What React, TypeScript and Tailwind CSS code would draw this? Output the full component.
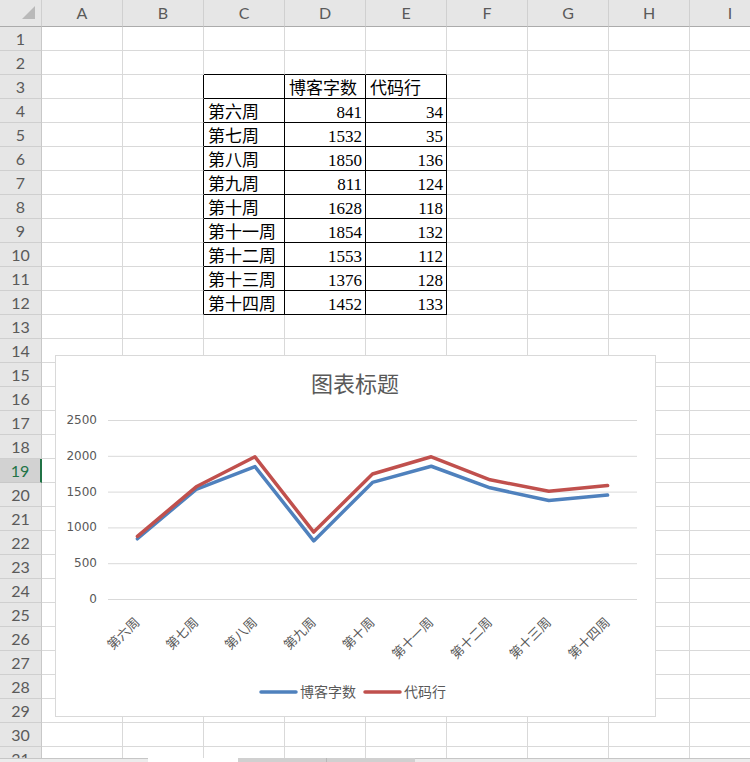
import React from 'react';

const COLS = ['A', 'B', 'C', 'D', 'E', 'F', 'G', 'H', 'I'];
const ROW_COUNT = 31;

const weeks = ['第六周', '第七周', '第八周', '第九周', '第十周', '第十一周', '第十二周', '第十三周', '第十四周'];
const blog = [841, 1532, 1850, 811, 1628, 1854, 1553, 1376, 1452];
const code = [34, 35, 136, 124, 118, 132, 112, 128, 133];

const inTable = (r: number, c: number) => r >= 3 && r <= 12 && c >= 3 && c <= 5;

function cellText(r: number, c: number): { text: string; right?: boolean } | null {
  if (!inTable(r, c)) return null;
  if (r === 3) {
    if (c === 4) return { text: '博客字数' };
    if (c === 5) return { text: '代码行' };
    return null;
  }
  const i = r - 4;
  if (c === 3) return { text: weeks[i] };
  if (c === 4) return { text: String(blog[i]), right: true };
  return { text: String(code[i]), right: true };
}

function Chart() {
  const x0 = 52;
  const x1 = 581;
  const y0 = 243;
  const k = (243 - 64) / 2500;
  const step = (x1 - x0) / 9;
  const cx = (i: number) => x0 + (i + 0.5) * step;
  const y = (v: number) => y0 - v * k;
  const blue = blog.map((v, i) => `${cx(i)},${y(v)}`).join(' ');
  const red = blog.map((v, i) => `${cx(i)},${y(v + code[i])}`).join(' ');
  const ticks = [0, 500, 1000, 1500, 2000, 2500];

  return (
    <div className="absolute left-[55px] top-[355px] w-[601px] h-[362px] border border-[#d9d9d9] bg-white">
      <svg width="599" height="360" className="block">
        <text x="299" y="36" textAnchor="middle" fontSize="22" fill="#595959" fontFamily="'Noto Sans CJK SC', sans-serif">
          图表标题
        </text>
        {ticks.map(t => (
          <g key={t}>
            <line x1={x0} x2={x1} y1={y(t) + 0.5} y2={y(t) + 0.5} stroke="#d9d9d9" strokeWidth="1" />
            <text x="41" y={y(t) + 4} textAnchor="end" fontSize="12" fill="#595959" fontFamily="'DejaVu Sans', sans-serif">
              {t}
            </text>
          </g>
        ))}
        <polyline points={blue} fill="none" stroke="#4f81bd" strokeWidth="3.5" strokeLinejoin="round" strokeLinecap="round" />
        <polyline points={red} fill="none" stroke="#c0504d" strokeWidth="3.5" strokeLinejoin="round" strokeLinecap="round" />
        {weeks.map((w, i) => (
          <text
            key={w}
            x={cx(i) + 3}
            y="267"
            textAnchor="end"
            fontSize="13"
            fill="#595959"
            fontFamily="'Noto Sans CJK SC', sans-serif"
            transform={`rotate(-45 ${cx(i) + 3} 267)`}
          >
            {w}
          </text>
        ))}
        <line x1="205" x2="240" y1="336" y2="336" stroke="#4f81bd" strokeWidth="3.5" strokeLinecap="round" />
        <text x="244" y="341" fontSize="14" fill="#595959" fontFamily="'Noto Sans CJK SC', sans-serif">
          博客字数
        </text>
        <line x1="309" x2="344" y1="336" y2="336" stroke="#c0504d" strokeWidth="3.5" strokeLinecap="round" />
        <text x="348" y="341" fontSize="14" fill="#595959" fontFamily="'Noto Sans CJK SC', sans-serif">
          代码行
        </text>
      </svg>
    </div>
  );
}

export default function App() {
  const rows = Array.from({ length: ROW_COUNT }, (_, i) => i + 1);

  return (
    <div className="relative w-[750px] h-[762px] overflow-hidden bg-white flex flex-col">
      <div className="h-[758px] overflow-hidden">
        <div className="grid grid-cols-[42px_repeat(9,81px)] grid-rows-[27px_repeat(31,24px)] w-[771px]">
          {/* corner */}
          <div className="bg-[#e6e6e6] border-r border-b border-r-[#cfcfcf] border-b-[#ababab] flex items-end justify-end pr-[6px] pb-[7px]">
            <svg width="13" height="13">
              <polygon points="13,0 13,13 0,13" fill="#b9b9b9" />
            </svg>
          </div>
          {COLS.map(c => (
            <div
              key={c}
              className="bg-[#e6e6e6] border-r border-b border-r-[#d0d0d0] border-b-[#ababab] flex items-center justify-center text-[16px] text-[#5a5a5a] font-['Lato',sans-serif]"
            >
              {c}
            </div>
          ))}
          {rows.map(r => (
            <React.Fragment key={r}>
              <div
                className={
                  r === 19
                    ? "bg-[#d2d2d2] border-b border-b-[#c8c8c8] border-r-2 border-r-[#217346] flex items-center justify-center text-[16px] text-[#217346] font-['Lato',sans-serif]"
                    : "bg-[#e6e6e6] border-b border-r border-b-[#cfcfcf] border-r-[#c8c8c8] flex items-center justify-center text-[16px] text-[#5a5a5a] font-['Lato',sans-serif]"
                }
              >
                {r}
              </div>
              {COLS.map((_, ci) => {
                const c = ci + 1;
                const t = inTable(r, c);
                const rightBlack = t || (c === 2 && r >= 3 && r <= 12);
                const bottomBlack = t || (r === 2 && c >= 3 && c <= 5);
                const content = cellText(r, c);
                return (
                  <div
                    key={c}
                    className={[
                      'border-r border-b flex items-center pt-[4px] text-[17px] text-black overflow-hidden whitespace-nowrap',
                      "font-['Liberation_Serif','Noto_Sans_CJK_SC',serif]",
                      rightBlack ? 'border-r-black' : 'border-r-[#d9d9d9]',
                      bottomBlack ? 'border-b-black' : 'border-b-[#d9d9d9]',
                      content?.right ? 'justify-end pr-[3px]' : 'justify-start pl-[4px]',
                    ].join(' ')}
                  >
                    {content?.text}
                  </div>
                );
              })}
            </React.Fragment>
          ))}
        </div>
      </div>
      <div className="h-[4px] flex">
        <div className="w-[148px] bg-[#ececec] border-t border-[#c6c6c6]" />
        <div className="w-[90px] bg-white" />
        <div className="w-[89px] bg-[#d0d0d0] border-r border-[#b8b8b8]" />
        <div className="w-[88px] bg-[#d0d0d0]" />
        <div className="flex-1 bg-[#ececec] border-t border-[#c6c6c6]" />
      </div>
      <Chart />
    </div>
  );
}
